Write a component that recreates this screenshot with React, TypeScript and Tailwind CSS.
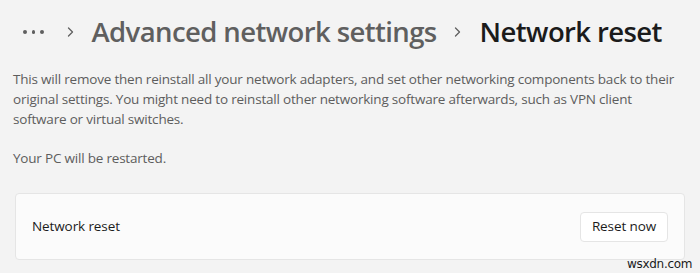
import React from 'react'

const Chevron = () => (
    <svg width="7" height="10" viewBox="0 0 7 10" fill="none" className="shrink-0">
        <path d="M1.5 1 L5.5 5 L1.5 9" stroke="#5f5f5f" strokeWidth="1.3" strokeLinecap="round" strokeLinejoin="round" />
    </svg>
)

const App = () => {
    return (
        <div className="relative w-[700px] h-[273px] overflow-hidden bg-[#f3f3f3] font-['Open_Sans',sans-serif]">
            {/* breadcrumb */}
            <div className="flex items-center h-[40px] mt-[12px] pl-[23px]">
                <div className="flex items-center gap-[5px]">
                    <span className="w-[3.5px] h-[3.5px] rounded-full bg-[#5f5f5f]" />
                    <span className="w-[3.5px] h-[3.5px] rounded-full bg-[#5f5f5f]" />
                    <span className="w-[3.5px] h-[3.5px] rounded-full bg-[#5f5f5f]" />
                </div>
                <div className="ml-[23px]"><Chevron /></div>
                <h2 className="ml-[18px] text-[27.5px] leading-[40px] font-semibold text-[#5f5f5f] tracking-[-0.6px]">Advanced network settings</h2>
                <div className="ml-[17px]"><Chevron /></div>
                <h1 className="ml-[19px] text-[27.5px] leading-[40px] font-semibold text-[#1b1b1b] tracking-[-0.6px]">Network reset</h1>
            </div>

            {/* description */}
            <div className="mt-[17px] pl-[13px] text-[13.5px] leading-[20px] tracking-[-0.2px] text-[#5d5d5d]">
                <p>This will remove then reinstall all your network adapters, and set other networking components back to their<br />original settings. You might need to reinstall other networking software afterwards, such as VPN client<br />software or virtual switches.</p>
                <p className="mt-[19px]">Your PC will be restarted.</p>
            </div>

            {/* card */}
            <div className="mx-[15px] mt-[25px] w-[670px] h-[67px] flex items-center justify-between bg-[#fbfbfb] border border-[#e5e5e5] rounded-[4px] pl-[16px] pr-[16px]">
                <span className="text-[13.5px] tracking-[-0.1px] text-[#1b1b1b]">Network reset</span>
                <button className="w-[88px] h-[30px] bg-white border border-[#e5e5e5] rounded-[4px] text-[13.5px] tracking-[-0.1px] text-[#1b1b1b]">Reset now</button>
            </div>

            <span className="absolute left-[627px] top-[255px] text-[12px] text-[#1a1a1a] font-['DejaVu_Sans',sans-serif] tracking-[-0.3px]">wsxdn.com</span>
        </div>
    )
}

export default App
